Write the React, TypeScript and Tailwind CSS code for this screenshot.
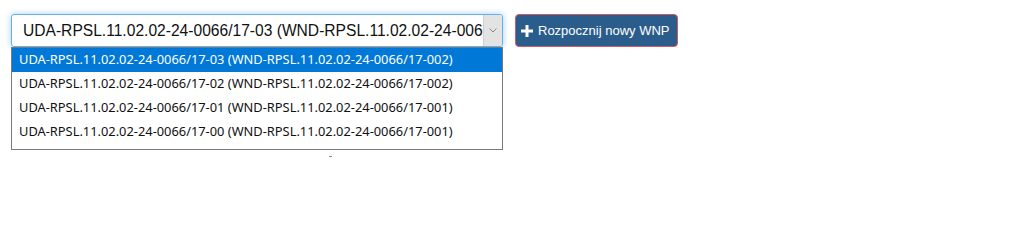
import React from "react";

const options = [
  "UDA-RPSL.11.02.02-24-0066/17-03 (WND-RPSL.11.02.02-24-0066/17-002)",
  "UDA-RPSL.11.02.02-24-0066/17-02 (WND-RPSL.11.02.02-24-0066/17-002)",
  "UDA-RPSL.11.02.02-24-0066/17-01 (WND-RPSL.11.02.02-24-0066/17-001)",
  "UDA-RPSL.11.02.02-24-0066/17-00 (WND-RPSL.11.02.02-24-0066/17-001)",
];

export default function App() {
  return (
    <div className="w-[1022px] h-[204px] bg-white relative overflow-hidden" style={{ fontFamily: '"Liberation Sans", Arial, sans-serif' }}>
      <div className="flex items-start gap-[12px] pl-[11px] pt-[14px]">
        <div className="relative">
          <div className="w-[492px] h-[33px] flex items-center rounded-[3px] border border-[#66afe9] shadow-[0_0_6px_rgba(102,175,233,0.6)] bg-white overflow-hidden">
            <div className="flex-1 min-w-0 overflow-hidden whitespace-nowrap pl-[11px] text-[15.6px] text-[#111]">
              UDA-RPSL.11.02.02-24-0066/17-03 (WND-RPSL.11.02.02-24-0066/17-002)
            </div>
            <div className="w-[19px] shrink-0 h-full bg-[#e3e3e3] border-l border-[#d0d0d0] flex items-center justify-center">
              <svg width="8" height="5" viewBox="0 0 8 5">
                <path d="M0.5 0.5 L4 4 L7.5 0.5" fill="none" stroke="#888" strokeWidth="1" />
              </svg>
            </div>
          </div>
          <div className="absolute left-0 top-[33px] w-[492px] border border-[#7a7a7a] bg-white pb-[5px]" style={{ fontFamily: '"Noto Sans", "Open Sans", sans-serif' }}>
            {options.map((o, i) => (
              <div
                key={o}
                className={`h-[24px] flex items-center pl-[7px] text-[12.85px] whitespace-nowrap ${i === 0 ? "bg-[#0078d7] text-white" : "text-[#111]"}`}
              >
                {o}
              </div>
            ))}
          </div>
        </div>
        <button className="h-[33px] pl-[5px] pr-[7px] flex items-center gap-[5px] rounded-[4px] bg-[#2b5d8c] border border-[#d05a63] text-white text-[13px]">
          <svg width="12" height="12" viewBox="0 0 12 12">
            <rect x="4.5" y="0" width="3" height="12" fill="white" />
            <rect x="0" y="4.5" width="12" height="3" fill="white" />
          </svg>
          <span>Rozpocznij nowy WNP</span>
        </button>
      </div>
      <span className="absolute left-[329px] top-[156px] w-[3px] h-[1px] bg-[#888]" />
    </div>
  );
}
